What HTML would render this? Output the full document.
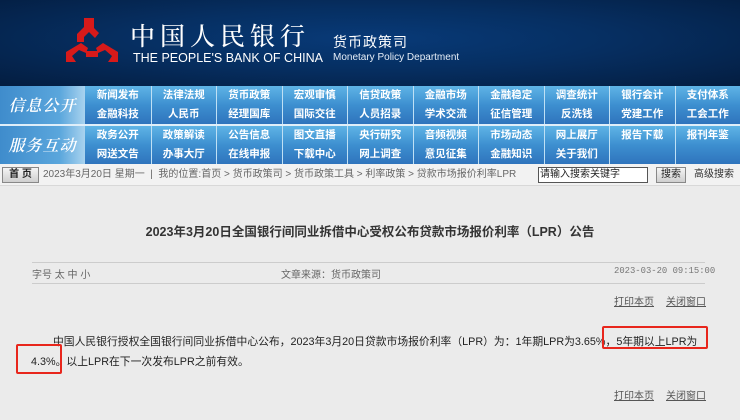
<!DOCTYPE html>
<html><head><meta charset="utf-8">
<style>
*{margin:0;padding:0;box-sizing:border-box}
body{width:740px;height:420px;overflow:hidden;background:#ebebeb;font-family:"Liberation Sans","Noto Sans CJK SC",sans-serif;position:relative}
.hdr{position:absolute;left:0;top:0;width:740px;height:86px;background:radial-gradient(ellipse at 50% 45%,#083a78 0%,#062f62 45%,#041d40 100%)}
.grp{position:absolute;left:0;width:740px;height:38px;background:linear-gradient(#5fb4e6,#3d8fd0 50%,#2f74bd)}
.lab{position:absolute;left:0;top:0;width:85px;height:38px;background:linear-gradient(90deg,#3f8ccc,#5aa6dc 70%,#a9d3ef);color:#fff;font:italic 600 16px "Noto Serif CJK SC",serif;line-height:38px;text-align:center;letter-spacing:1px}
.row{position:absolute;left:85px;height:19px;width:655px;display:flex}
.row div{width:65.5px;text-align:center;color:#fff;font-size:10.5px;font-weight:bold;line-height:19px;border-left:1px solid #bfe0f5}
.row div:first-child{border-left:none}
.bc{position:absolute;left:0;top:164px;width:740px;height:22px;background:#f2f2f2;border-bottom:1px solid #d8d8d8;font-size:10px;color:#666;line-height:22px}
.btn{position:absolute;top:3px;height:16px;background:linear-gradient(#f4f4f4,#cfcfcf);border:1px solid #888;font-size:10px;line-height:14px;text-align:center;color:#222;font-weight:bold}
</style></head><body>
<div class="hdr">
<svg style="position:absolute;left:64px;top:18px" width="56" height="50" viewBox="0 0 56 50">
<g fill="#d71a1a"><path d="M20 0h10v10l5 5-4 5-6-6-5 5v5h-7v-8l7-7z"/><path d="M2 34l15-9 7 5-2 5-7-3-7 6 4 6H2z"/><path d="M54 34l-15-9-7 5 2 5 7-3 7 6-4 6h10z"/><path d="M22 33h12v6H22z"/></g>
</svg>
<div style="position:absolute;left:130px;top:20px;color:#fff;font:500 25px 'Noto Serif CJK SC',serif;letter-spacing:5px;line-height:30px">中国人民银行</div>
<div style="position:absolute;left:133px;top:51px;color:#fff;font-size:12.5px;line-height:14px">THE PEOPLE'S BANK OF CHINA</div>
<div style="position:absolute;left:333px;top:34px;color:#fff;font-size:14px;letter-spacing:1px;line-height:16px">货币政策司</div>
<div style="position:absolute;left:333px;top:52px;color:#e6eef8;font-size:10px;line-height:12px">Monetary Policy Department</div>
</div>
<div class="grp" style="top:86px"><div class="lab">信息公开</div>
<div class="row" style="top:0"><div>新闻发布</div><div>法律法规</div><div>货币政策</div><div>宏观审慎</div><div>信贷政策</div><div>金融市场</div><div>金融稳定</div><div>调查统计</div><div>银行会计</div><div>支付体系</div></div>
<div class="row" style="top:19px"><div>金融科技</div><div>人民币</div><div>经理国库</div><div>国际交往</div><div>人员招录</div><div>学术交流</div><div>征信管理</div><div>反洗钱</div><div>党建工作</div><div>工会工作</div></div>
</div>
<div style="position:absolute;top:124px;left:0;width:740px;height:2px;background:#dfeef9"></div>
<div class="grp" style="top:126px"><div class="lab">服务互动</div>
<div class="row" style="top:0"><div>政务公开</div><div>政策解读</div><div>公告信息</div><div>图文直播</div><div>央行研究</div><div>音频视频</div><div>市场动态</div><div>网上展厅</div><div>报告下载</div><div>报刊年鉴</div></div>
<div class="row" style="top:19px"><div>网送文告</div><div>办事大厅</div><div>在线申报</div><div>下载中心</div><div>网上调查</div><div>意见征集</div><div>金融知识</div><div>关于我们</div><div></div><div></div></div>
</div>
<div class="bc">
<div class="btn" style="left:2px;width:37px">首 页</div>
<span style="position:absolute;left:43px">2023年3月20日 星期一 &nbsp;|&nbsp; 我的位置:首页 &gt; 货币政策司 &gt; 货币政策工具 &gt; 利率政策 &gt; 贷款市场报价利率LPR</span>
<div style="position:absolute;left:538px;top:3px;width:110px;height:16px;background:#fff;border:1px solid #555;font-size:10px;line-height:14px;color:#222;padding-left:1px">请输入搜索关键字</div>
<div class="btn" style="left:656px;width:30px;font-weight:normal">搜索</div>
<span style="position:absolute;left:694px;color:#333">高级搜索</span>
</div>
<div style="position:absolute;top:221px;left:0;width:740px;text-align:center;font-size:12.5px;font-weight:bold;color:#333">2023年3月20日全国银行间同业拆借中心受权公布贷款市场报价利率（LPR）公告</div>
<div style="position:absolute;top:262px;left:32px;width:673px;border-top:1px solid #ccc"></div>
<div style="position:absolute;top:266px;left:32px;font-size:10px;color:#666">字号 太 中 小</div>
<div style="position:absolute;top:266px;left:281px;font-size:10px;color:#666">文章来源：货币政策司</div>
<div style="position:absolute;top:266px;left:614px;font:8.9px 'Liberation Mono',monospace;color:#777">2023-03-20 09:15:00</div>
<div style="position:absolute;top:283px;left:32px;width:673px;border-top:1px solid #ccc"></div>
<div style="position:absolute;top:293px;left:614px;font-size:10px;color:#555;text-decoration:underline">打印本页</div>
<div style="position:absolute;top:293px;left:666px;font-size:10px;color:#555;text-decoration:underline">关闭窗口</div>
<div style="position:absolute;top:333px;left:53px;font-size:10.8px;color:#222;white-space:nowrap">中国人民银行授权全国银行间同业拆借中心公布，2023年3月20日贷款市场报价利率（LPR）为：1年期LPR为3.65%，5年期以上LPR为</div>
<div style="position:absolute;top:353px;left:31px;font-size:10.8px;color:#222;white-space:nowrap">4.3%。以上LPR在下一次发布LPR之前有效。</div>
<div style="position:absolute;left:602px;top:326px;width:106px;height:23px;border:2px solid #e8261c;border-radius:2px"></div>
<div style="position:absolute;left:16px;top:344px;width:46px;height:30px;border:2px solid #e8261c;border-radius:2px"></div>
<div style="position:absolute;top:387px;left:614px;font-size:10px;color:#555;text-decoration:underline">打印本页</div>
<div style="position:absolute;top:387px;left:666px;font-size:10px;color:#555;text-decoration:underline">关闭窗口</div>
</body></html>
